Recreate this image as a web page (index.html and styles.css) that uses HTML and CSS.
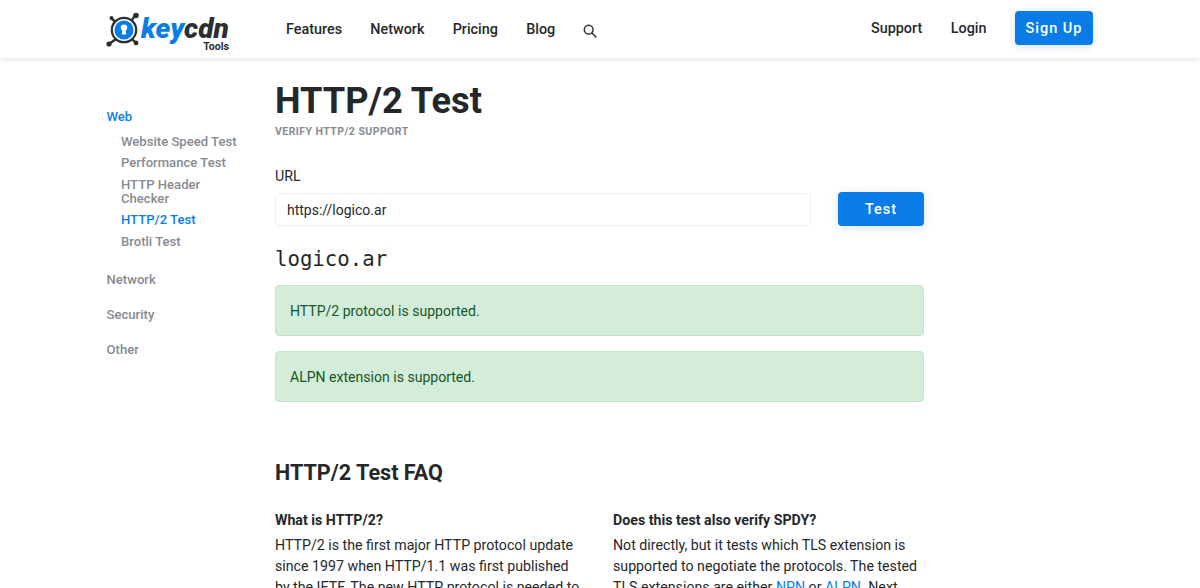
FILE: index.html
```html
<!DOCTYPE html>
<html lang="en">
<head>
<meta charset="utf-8">
<title>HTTP/2 Test</title>
<link rel="stylesheet" href="styles.css">
</head>
<body>
<header class="topbar">
  <a class="logo" href="#">
    <svg class="logo-mark" viewBox="0 0 36 36" width="36" height="36" aria-hidden="true">
      <g stroke="#2b2f33" stroke-width="2.4" stroke-linecap="round" fill="#2b2f33">
        <line x1="6" y1="7" x2="11" y2="11"/>
        <line x1="29" y1="3" x2="25" y2="10"/>
        <line x1="3" y1="32" x2="10" y2="27"/>
        <line x1="30" y1="31" x2="25" y2="26"/>
        <circle cx="5.5" cy="6" r="2" stroke="none"/>
        <circle cx="30" cy="3.5" r="2.8" stroke="none"/>
        <circle cx="3" cy="32" r="2.6" stroke="none"/>
        <circle cx="30" cy="31" r="2.4" stroke="none"/>
      </g>
      <circle cx="18" cy="18" r="12.2" fill="#fff" stroke="#2b2f33" stroke-width="2.2"/>
      <circle cx="18" cy="18" r="9.6" fill="#0a7ce8"/>
      <circle cx="18" cy="15.6" r="3.2" fill="#fff"/>
      <path d="M16.6 16.5h2.8l.8 6h-4.4z" fill="#fff"/>
    </svg>
    <span class="logo-words">
      <span class="logo-name"><span class="logo-key">key</span><span class="logo-cdn">cdn</span></span>
      <span class="logo-sub">Tools</span>
    </span>
  </a>
  <nav class="nav-main">
    <a href="#">Features</a>
    <a href="#">Network</a>
    <a href="#">Pricing</a>
    <a href="#">Blog</a>
    <a href="#" class="nav-search" aria-label="Search">
      <svg viewBox="0 0 16 16" width="14" height="14" fill="none" stroke="#2b2f33" stroke-width="1.7" stroke-linecap="round"><circle cx="6.5" cy="6.5" r="5"/><line x1="10.3" y1="10.3" x2="14.8" y2="14.8"/></svg>
    </a>
  </nav>
  <nav class="nav-side">
    <a href="#">Support</a>
    <a href="#">Login</a>
    <a href="#" class="btn btn-signup">Sign Up</a>
  </nav>
</header>

<div class="page">
  <aside class="sidebar">
    <a href="#" class="side-group active">Web</a>
    <ul class="side-list">
      <li><a href="#">Website Speed Test</a></li>
      <li><a href="#">Performance Test</a></li>
      <li><a href="#">HTTP Header Checker</a></li>
      <li><a href="#" class="active">HTTP/2 Test</a></li>
      <li><a href="#">Brotli Test</a></li>
    </ul>
    <a href="#" class="side-group">Network</a>
    <a href="#" class="side-group">Security</a>
    <a href="#" class="side-group">Other</a>
  </aside>

  <main class="content">
    <h1>HTTP/2 Test</h1>
    <p class="subtitle">VERIFY HTTP/2 SUPPORT</p>

    <form class="url-form">
      <label class="url-label" for="url">URL</label>
      <div class="url-row">
        <input id="url" class="url-input" type="text" value="https://logico.ar">
        <button type="button" class="btn btn-test">Test</button>
      </div>
    </form>

    <h2 class="host">logico.ar</h2>
    <div class="alert">HTTP/2 protocol is supported.</div>
    <div class="alert">ALPN extension is supported.</div>

    <h2 class="faq-title">HTTP/2 Test FAQ</h2>
    <div class="faq">
      <section>
        <h3>What is HTTP/2?</h3>
        <p>HTTP/2 is the first major HTTP protocol update since 1997 when HTTP/1.1 was first published by the IETF. The new HTTP protocol is needed to</p>
      </section>
      <section>
        <h3>Does this test also verify SPDY?</h3>
        <p>Not directly, but it tests which TLS extension is supported to negotiate the protocols. The tested TLS extensions are either <a href="#">NPN</a> or <a href="#">ALPN</a>. Next</p>
      </section>
    </div>
  </main>
</div>
</body>
</html>
```
FILE: styles.css
```css
* { box-sizing: border-box; }
html, body { margin: 0; height: 588px; overflow: hidden; }
body { font-family: Roboto, "Liberation Sans", sans-serif; font-size: 14px; line-height: 24px; color: #25282b; background: #fff; }
a { color: inherit; text-decoration: none; }

.topbar { height: 58px; display: flex; align-items: center; padding: 0 107px 0 106px; background: #fff; box-shadow: 0 2px 5px rgba(0, 0, 0, .1); position: relative; }
.logo { display: flex; align-items: flex-start; width: 180px; height: 42px; }
.logo-mark { flex: none; margin-top: 4px; }
.logo-words { display: flex; flex-direction: column; align-items: flex-end; margin-left: -1px; }
.logo-name { font: italic 900 28px/28px Roboto, sans-serif; margin-top: 7px; }
.logo-key { color: #0a7ce8; }
.logo-cdn { color: #2b2f33; }
.logo-sub { font-size: 10.5px; line-height: 10px; margin-top: -1px; font-weight: 700; color: #2b2f33; }

.nav-main, .nav-side { display: flex; align-items: center; font-size: 14.4px; font-weight: 500; color: #25282b; }
.nav-main { gap: 28.2px; margin-top: 2px; }
.nav-search { display: flex; margin-top: 2px; }
.nav-side { margin-left: auto; gap: 28.5px; }

.btn { display: inline-block; border: 0; border-radius: 4px; background: #0a7ce8; color: #fff; font-family: Roboto, sans-serif; font-weight: 500; font-size: 14.5px; letter-spacing: 1px; text-align: center; box-shadow: 0 2px 8px rgba(10, 80, 160, .16); }
.btn-signup { width: 78px; height: 34px; line-height: 35px; margin-bottom: 2px; }
.btn-test { width: 86px; height: 34px; flex: none; }

.page { display: flex; padding: 0 0 0 106px; }
.sidebar { width: 169px; flex: none; padding-top: 50px; font-size: 13.1px; font-weight: 500; color: #868b92; }
.side-group { display: block; line-height: 18px; margin-bottom: 17px; padding-left: .5px; }
.side-group.active { color: #0a7ce8; margin-bottom: 9px; }
.side-list { list-style: none; margin: 0 0 22px; padding: 0 32px 0 15px; line-height: 14px; }
.side-list li { margin-bottom: 7.4px; }
.side-list .active { color: #0a7ce8; }

.content { width: 649px; flex: none; }
h1 { margin: 21px 0 0; font-size: 36.2px; line-height: 44px; font-weight: 700; color: #25282b; }
.subtitle { margin: 1px 0 0; font-size: 10.5px; line-height: 16px; font-weight: 700; letter-spacing: .45px; color: #868b92; }
.url-form { margin-top: 27px; }
.url-label { display: block; font-size: 14.2px; line-height: 18px; margin-bottom: 7px; }
.url-row { display: flex; justify-content: space-between; align-items: center; }
.url-input { width: 536px; height: 33px; padding: 1px 11px 0; border: 1px solid #eef0f2; border-radius: 4px; font: 14px Roboto, sans-serif; color: #25282b; background: #fff; }
.host { margin: 19px 0 0; font: 400 20.7px/28px "DejaVu Sans Mono", monospace; color: #25282b; }
.alert { height: 51px; margin-top: 15px; padding: 0 14px; line-height: 51px; font-size: 14.05px; color: #155724; background: #d4edda; border: 1px solid #c3e6cb; border-radius: 4px; }
.host + .alert { margin-top: 12px; }
.faq-title { margin: 58px 0 0; font-size: 21.6px; line-height: 26px; font-weight: 700; }
.faq { display: grid; grid-template-columns: 1fr 1fr; gap: 27px; margin-top: 22px; }
.faq h3 { margin: 0; font-size: 14.2px; line-height: 24px; font-weight: 700; }
.faq p { margin: 3px 0 0; font-size: 14.2px; line-height: 21px; }
.faq p a { color: #0a7ce8; }
```
